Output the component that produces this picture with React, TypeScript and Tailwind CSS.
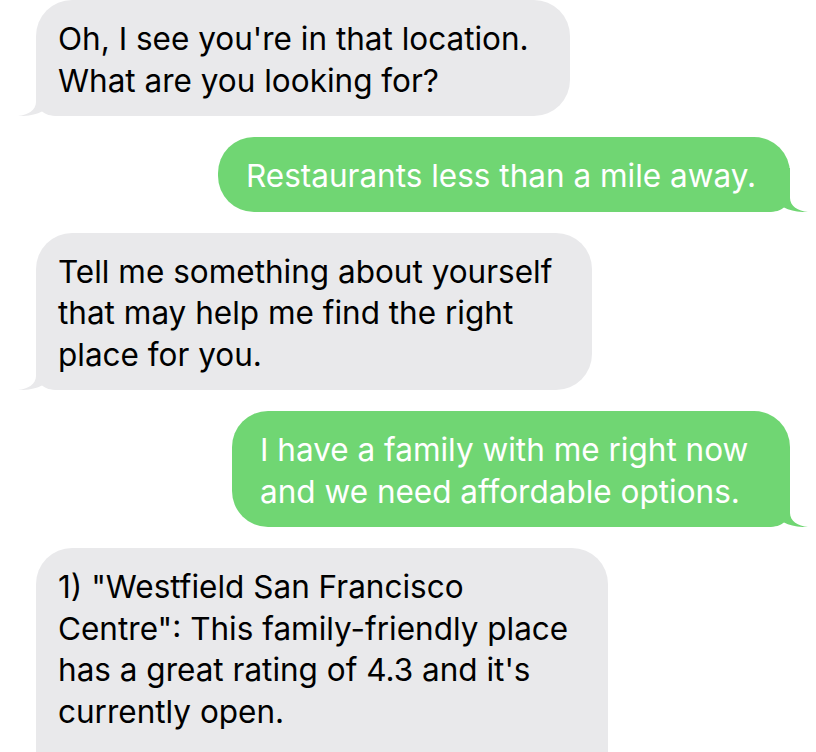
const Tail = ({ fill, side }: { fill: string; side: 'left' | 'right' }) => (
  <svg
    width={60}
    height={44}
    viewBox="0 0 60 44"
    className={
      side === 'left'
        ? 'absolute bottom-0 left-[-18px]'
        : 'absolute bottom-0 right-[-18px] -scale-x-100'
    }
  >
    <path
      d="M18 0 V30 C18 38 10 43 0 44 C9 44.5 18 42.5 24 39.5 C28 42.5 32 44 40 44 H60 V0 Z"
      fill={fill}
    />
  </svg>
)

type Msg = { from: 'them' | 'me'; lines: string[]; width: string; tail?: boolean }

const messages: Msg[] = [
  { from: 'them', lines: ["Oh, I see you're in that location.", 'What are you looking for?'], width: 'w-[534px]', tail: true },
  { from: 'me', lines: ['Restaurants less than a mile away.'], width: 'w-[572px]', tail: true },
  {
    from: 'them',
    lines: ['Tell me something about yourself', 'that may help me find the right', 'place for you.'],
    width: 'w-[556px]',
    tail: true,
  },
  { from: 'me', lines: ['I have a family with me right now', 'and we need affordable options.'], width: 'w-[558px]', tail: true },
  {
    from: 'them',
    lines: [
      '1) "Westfield San Francisco',
      'Centre": This family-friendly place',
      "has a great rating of 4.3 and it's",
      'currently open.',
      '',
    ],
    width: 'w-[572px]',
  },
]

const Bubble = ({ msg }: { msg: Msg }) => {
  const mine = msg.from === 'me'
  return (
    <div className={mine ? 'flex justify-end pr-[26px]' : 'flex justify-start pl-[36px]'}>
      <div
        className={`relative ${msg.width} rounded-[36px] pt-[18px] pb-[15px] text-[31.5px] leading-[41.5px] ${
          mine ? 'bg-[#70d673] pl-[28px] pr-4 text-white' : 'bg-[#e9e9eb] pl-[22px] pr-4 text-black'
        }`}
      >
        {msg.tail && <Tail fill={mine ? '#70d673' : '#e9e9eb'} side={mine ? 'right' : 'left'} />}
        <p className="relative whitespace-nowrap">
          {msg.lines.map((l, i) => (
            <span key={i} className="block h-[41.5px]">
              {l}
            </span>
          ))}
        </p>
      </div>
    </div>
  )
}

export default function App() {
  return (
    <div className="h-[752px] w-[816px] overflow-hidden bg-white font-['Inter','Noto_Sans',sans-serif]">
      <div className="flex flex-col gap-[21px]">
        {messages.map((m, i) => (
          <Bubble key={i} msg={m} />
        ))}
      </div>
    </div>
  )
}
